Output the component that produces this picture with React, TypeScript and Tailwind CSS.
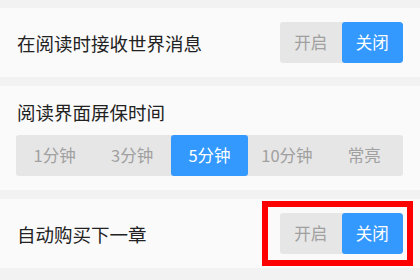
import { useState } from 'react';

const font = { fontFamily: '"Noto Sans CJK SC", "Noto Sans", sans-serif' };

function Toggle({ on }: { on: boolean }) {
  return (
    <div className="flex h-[41px] w-[123px] overflow-hidden rounded-[3px] bg-[#e6e6e6] text-[16.5px]">
      <div
        className={`flex flex-1 items-center justify-center ${on ? 'rounded-[3px] bg-[#3399ff] text-white' : 'text-[#a0a0a0]'}`}
      >
        开启
      </div>
      <div
        className={`flex flex-1 items-center justify-center ${!on ? 'rounded-[3px] bg-[#3399ff] text-white' : 'text-[#a0a0a0]'}`}
      >
        关闭
      </div>
    </div>
  );
}

const durations = ['1分钟', '3分钟', '5分钟', '10分钟', '常亮'];

export default function App() {
  const [duration] = useState('5分钟');

  return (
    <div className="h-[280px] w-[420px] overflow-hidden bg-[#f2f2f2] pt-[8px]" style={font}>
      {/* world messages */}
      <div className="flex h-[69px] items-center justify-between bg-[#fafafa] pl-[17px] pr-[17px]">
        <span className="pt-[2px] text-[18.5px] text-[#222]">在阅读时接收世界消息</span>
        <Toggle on={false} />
      </div>

      {/* screen saver time */}
      <div className="mt-[9px] bg-[#fafafa] pb-[14px] pl-[16px] pr-[17px] pt-[14px]">
        <div className="h-[24px] pl-[1px] text-[18.5px] leading-[24px] text-[#222]">阅读界面屏保时间</div>
        <div className="mt-[11px] grid h-[41px] grid-cols-5 overflow-hidden rounded-[3px] bg-[#e6e6e6] text-[16.5px]">
          {durations.map(d => (
            <div
              key={d}
              className={`flex items-center justify-center ${d === duration ? 'rounded-[3px] bg-[#3399ff] text-white' : 'text-[#a0a0a0]'}`}
            >
              {d}
            </div>
          ))}
        </div>
      </div>

      {/* auto buy */}
      <div className="relative mt-[9px] flex h-[69px] items-center justify-between bg-[#fafafa] pl-[17px] pr-[17px]">
        <span className="pt-[2px] text-[18.5px] text-[#222]">自动购买下一章</span>
        <Toggle on={false} />
        <div className="absolute left-[262px] top-[2px] h-[65px] w-[151px] border-[6px] border-[#ff0000]" />
      </div>
    </div>
  );
}
